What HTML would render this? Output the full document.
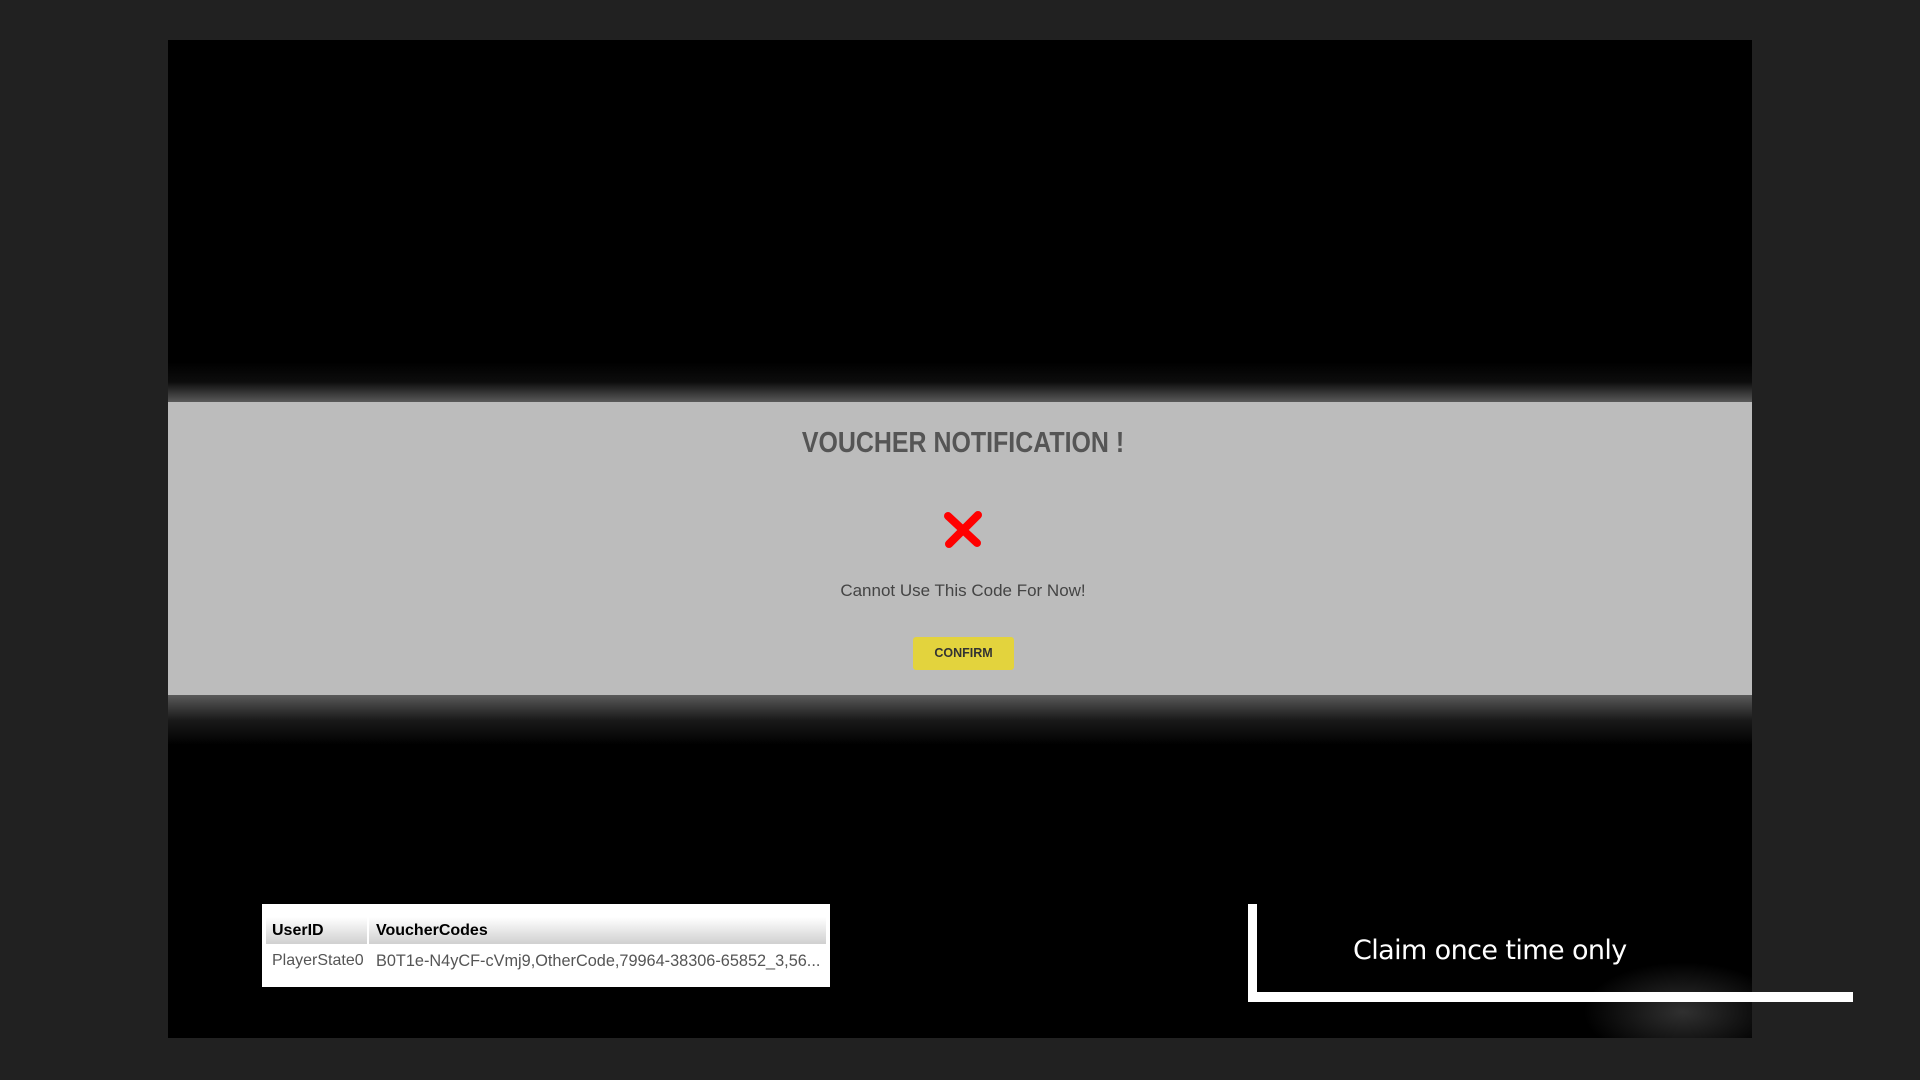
<!DOCTYPE html>
<html><head><meta charset="utf-8"><style>
*{margin:0;padding:0;box-sizing:border-box}
html,body{width:1920px;height:1080px;background:#212121;overflow:hidden;font-family:"Liberation Sans",sans-serif}
#stage{position:absolute;left:168px;top:40px;width:1584px;height:998px;background:#000;overflow:hidden}
.fadeTop{position:absolute;left:0;top:322px;width:1584px;height:40px;background:linear-gradient(#000,#0c0c0c 50%,#5a5a5a)}
.band{position:absolute;left:0;top:362px;width:1584px;height:293px;background:#bcbcbc}
.fadeBot{position:absolute;left:0;top:655px;width:1584px;height:50px;background:linear-gradient(#5a5a5a,#1a1a1a 50%,#000)}
.title{position:absolute;left:3px;width:1584px;top:387px;text-align:center;font-weight:bold;font-size:29px;color:#555;transform:scaleX(0.86);transform-origin:792px 0}
.msg{position:absolute;left:3px;width:1584px;top:541px;text-align:center;font-size:17px;color:#444}
.btn{position:absolute;left:745px;top:597px;width:101px;height:33px;background:#e3d33d;border-radius:3px;text-align:center;line-height:33px;font-weight:bold;font-size:12.5px;color:#333}
.tbl{position:absolute;left:94px;top:864px;width:568px;height:83px;background:#fff}
.hdr{position:absolute;left:4px;top:13px;width:560px;height:27px;background:linear-gradient(#fff,#d0d0d0)}
.hdr .d{position:absolute;left:101px;top:0;width:2px;height:27px;background:#fff}
.h1{position:absolute;left:10px;top:18px;font-weight:bold;font-size:16px;color:#000}
.h2{position:absolute;left:114px;top:18px;font-weight:bold;font-size:16px;color:#000}
.r1{position:absolute;left:10px;top:48px;font-size:16px;color:#555}
.r2{position:absolute;left:114px;top:48px;font-size:16.3px;color:#555;white-space:nowrap}
.glow{position:absolute;left:1415px;top:922px;width:200px;height:100px;background:radial-gradient(ellipse at center,rgba(48,48,48,1),rgba(0,0,0,0) 70%)}
.vbar{position:absolute;left:1248px;top:904px;width:9px;height:98px;background:#fff}
.hbar{position:absolute;left:1248px;top:992px;width:605px;height:10px;background:#fff}
.claim{position:absolute;left:1353px;top:935px;font-family:"Comic Sans MS","DejaVu Sans",cursive;font-size:27px;color:#fff;white-space:nowrap;letter-spacing:-0.6px}
</style></head><body>
<div id="stage">
<div class="fadeTop"></div>
<div class="band"></div>
<div class="fadeBot"></div>
<div class="glow"></div>
<div class="title">VOUCHER NOTIFICATION !</div>
<svg style="position:absolute;left:773px;top:468px" width="44" height="44" viewBox="0 0 44 44"><path d="M7 8 L36 35 M37 7 L8 36" stroke="#f00" stroke-width="8" stroke-linecap="round" fill="none"/></svg>
<div class="msg">Cannot Use This Code For Now!</div>
<div class="btn">CONFIRM</div>
<div class="tbl"><div class="hdr"><div class="d"></div></div>
<div class="h1">UserID</div><div class="h2">VoucherCodes</div>
<div class="r1">PlayerState0</div><div class="r2">B0T1e-N4yCF-cVmj9,OtherCode,79964-38306-65852_3,56...</div></div>
</div>
<div class="vbar"></div>
<div class="hbar"></div>
<div class="claim">Claim once time only</div>
</body></html>
